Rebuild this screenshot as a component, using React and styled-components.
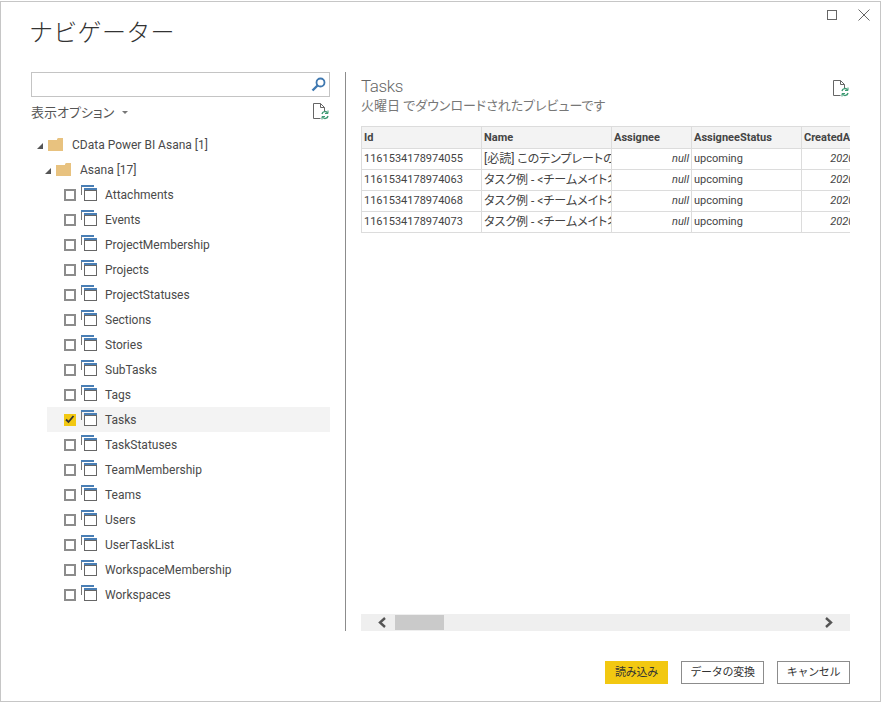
import React from 'react';
import styled, { createGlobalStyle } from 'styled-components';

const Global = createGlobalStyle`
  html, body { margin: 0; padding: 0; background: #fff; }
  body { font-family: Roboto, "Noto Sans CJK JP", sans-serif; font-feature-settings: "palt"; }
  * { box-sizing: border-box; }
`;
const Window = styled.div`
  width: 881px; height: 701px; margin-top: 1px; background: #fff;
  border: 1px solid #c6c6c6;
  display: flex; flex-direction: column;
`;
const Header = styled.header`
  height: 70px; padding: 13px 10px 0 28px; display: flex; justify-content: space-between; align-items: flex-start;
`;
const Title = styled.h1`
  margin: 0; font-size: 24px; line-height: 36px; font-weight: 300; color: #333; font-feature-settings: normal; letter-spacing: 0.3px;
`;
const Controls = styled.div`
  display: flex; gap: 21px; align-items: center; margin-top: -6px;
`;
const Main = styled.main`
  height: 559px; display: flex; padding-left: 30px;
`;
const LeftPane = styled.section`
  width: 299px; display: flex; flex-direction: column;
`;
const Search = styled.div`
  height: 25px; border: 1px solid #c4c4c4; display: flex; justify-content: flex-end; align-items: center; padding-right: 3px;
`;
const Options = styled.div`
  display: flex; justify-content: space-between; align-items: flex-start; height: 35px; padding-top: 6px; padding-right: 1px;
`;
const OptionLabel = styled.span`
  font-size: 13px; line-height: 19px; color: #555; display: flex; align-items: center; gap: 8px;
`;
const Caret = styled.i`
  width: 0; height: 0; border-left: 3px solid transparent; border-right: 3px solid transparent; border-top: 3px solid #777;
`;
const Tree = styled.ul`
  list-style: none; margin: 0; padding: 0;
`;
const Row = styled.li`
  height: 25px; display: flex; align-items: center; font-size: 12px; color: #4a4a4a;
  margin-left: ${p => p.$indent}px;
  padding-left: ${p => p.$pad || 0}px;
  background: ${p => p.$active ? '#f3f3f3' : 'transparent'};
`;
const Arrow = styled.i`
  width: 0; height: 0; margin-right: 5px; border-left: 6px solid transparent; border-bottom: 6px solid #555; margin-top: 2px;
`;
const FolderWrap = styled.span`
  display: flex; margin-right: 9px;
`;
const Check = styled.span`
  width: 12px; height: 12px; margin-right: 5px; display: flex; align-items: center; justify-content: center;
  background: ${p => p.$on ? '#f2c811' : '#fff'};
  border: ${p => p.$on ? 'none' : '2px solid #8c8c8c'};
`;
const TableIconWrap = styled.span`
  display: flex; margin-right: 8px; margin-top: -3px;
`;
const Divider = styled.div`
  width: 1px; background: #8c8c8c; margin-left: 15px; margin-right: 15px;
`;
const RightPane = styled.section`
  width: 489px; display: flex; flex-direction: column;
`;
const PreviewHead = styled.div`
  height: 54px; display: flex; justify-content: space-between; align-items: flex-start; padding-right: 1px;
`;
const PreviewTitle = styled.div`
  font-size: 17px; line-height: 24px; font-weight: 300; color: #666; margin-top: 2px; letter-spacing: -0.4px;
`;
const PreviewSub = styled.div`
  font-size: 13px; line-height: 16px; color: #777;
`;
const RefreshTop = styled.span`
  display: flex; margin-top: 8px;
`;
const TableClip = styled.div`
  flex: 1; overflow: hidden; min-height: 0;
`;
const Table = styled.table`
  border-collapse: collapse; table-layout: fixed; width: 566px; font-size: 11px; color: #444;
`;
const Th = styled.th`
  height: 22px; padding: 0 2px; background: #f3f3f3; border: 1px solid #dcdcdc; font-weight: 700; text-align: left;
  white-space: nowrap; overflow: hidden; color: #444;
`;
const Td = styled.td`
  height: 21px; padding: 0 2px; border: 1px solid #dcdcdc; white-space: nowrap; overflow: hidden; line-height: 14px;
  text-align: ${p => p.$num ? 'right' : 'left'};
  font-style: ${p => p.$num ? 'italic' : 'normal'};
  font-size: ${p => p.$jp ? '12px' : 'inherit'};
`;
const Scrollbar = styled.div`
  height: 17px; background: #efefef; display: flex; align-items: center; justify-content: space-between; position: relative; padding: 0 16px;
`;
const Thumb = styled.div`
  position: absolute; left: 34px; top: 1px; width: 49px; height: 15px; background: #cacaca;
`;
const Footer = styled.footer`
  flex: 1; display: flex; justify-content: flex-end; gap: 13px; padding: 30px 30px 0 0;
`;
const Button = styled.button`
  height: 23px; padding: 0; font-family: inherit; font-size: 11px; letter-spacing: -0.3px; color: #333; line-height: 1;
  width: ${p => p.$w}px;
  background: ${p => p.$primary ? '#f2c811' : '#fff'};
  border: ${p => p.$primary ? 'none' : '1px solid #8c8c8c'};
`;

const Folder = () => (
  <svg width="15" height="13" viewBox="0 0 15 13"><path d="M0 2h9V1l1-1h5v13H0z" fill="#e8c27f" /></svg>
);
const TableIcon = () => (
  <svg width="16" height="16" viewBox="0 0 16 16">
    <rect x="0" y="0" width="13" height="2" fill="#4a7fb5" />
    <path d="M.5 2v8" stroke="#777" fill="none" />
    <rect x="3" y="3" width="13" height="3" fill="#4a7fb5" />
    <rect x="3.5" y="5.5" width="12" height="10" fill="#fff" stroke="#666" />
  </svg>
);
const DocRefresh = () => (
  <svg width="16" height="17" viewBox="0 0 16 17" fill="none">
    <path d="M.5.5h7l4 4v4M7.5.5v4h4M.5.5v15h7" stroke="#666" />
    <path d="M9 11a3 3 0 0 1 5.500-1M15 13a3 3 0 0 1-5.500 1" stroke="#3d9a73" strokeWidth="1.4" />
    <path d="M15 7.500v3h-3M9 16.500v-3h3" stroke="#3d9a73" strokeWidth="1" />
  </svg>
);
const tables = ['Attachments','Events','ProjectMembership','Projects','ProjectStatuses','Sections','Stories','SubTasks','Tags','Tasks','TaskStatuses','TeamMembership','Teams','Users','UserTaskList','WorkspaceMembership','Workspaces'];
const rows = [
  ['1161534178974055','[必読] このテンプレートの使い方'],
  ['1161534178974063','タスク例 - <チームメイト名>'],
  ['1161534178974068','タスク例 - <チームメイト名>'],
  ['1161534178974073','タスク例 - <チームメイト名>'],
];

export default function App() {
  return (
    <Window>
      <Global />
      <Header>
        <Title>ナビゲーター</Title>
        <Controls>
          <svg width="10" height="10" viewBox="0 0 10 10"><rect x=".5" y=".5" width="9" height="9" fill="none" stroke="#666" /></svg>
          <svg width="12" height="12" viewBox="0 0 12 12"><path d="M.5.5l11 11M11.5.5l-11 11" stroke="#666" fill="none" /></svg>
        </Controls>
      </Header>
      <Main>
        <LeftPane>
          <Search>
            <svg width="15" height="15" viewBox="0 0 15 15" fill="none">
              <circle cx="9.500" cy="5.500" r="4" stroke="#3f78b0" strokeWidth="1.800" />
              <path d="M6.500 8.500L1.500 13.500" stroke="#3f78b0" strokeWidth="2.400" />
            </svg>
          </Search>
          <Options>
            <OptionLabel>表示オプション<Caret /></OptionLabel>
            <DocRefresh />
          </Options>
          <Tree>
            <Row $indent={6}><Arrow /><FolderWrap><Folder /></FolderWrap>CData Power BI Asana [1]</Row>
            <Row $indent={14}><Arrow /><FolderWrap><Folder /></FolderWrap>Asana [17]</Row>
            {tables.map(t => (
              <Row key={t} $indent={16} $pad={17} $active={t === 'Tasks'}>
                <Check $on={t === 'Tasks'}>
                  {t === 'Tasks' && <svg width="10" height="9" viewBox="0 0 10 9"><path d="M1 4.500l2.500 2.500 5-6" stroke="#333" strokeWidth="1.800" fill="none" /></svg>}
                </Check>
                <TableIconWrap><TableIcon /></TableIconWrap>
                {t}
              </Row>
            ))}
          </Tree>
        </LeftPane>
        <Divider />
        <RightPane>
          <PreviewHead>
            <div>
              <PreviewTitle>Tasks</PreviewTitle>
              <PreviewSub>火曜日 でダウンロードされたプレビューです</PreviewSub>
            </div>
            <RefreshTop><DocRefresh /></RefreshTop>
          </PreviewHead>
          <TableClip>
            <Table>
              <colgroup>
                <col width="120" /><col width="130" /><col width="80" /><col width="110" /><col width="126" />
              </colgroup>
              <thead>
                <tr><Th>Id</Th><Th>Name</Th><Th>Assignee</Th><Th>AssigneeStatus</Th><Th>CreatedAt</Th></tr>
              </thead>
              <tbody>
                {rows.map(r => (
                  <tr key={r[0]}>
                    <Td>{r[0]}</Td><Td $jp>{r[1]}</Td><Td $num>null</Td><Td>upcoming</Td><Td $num>2020/08/04 9:00:00</Td>
                  </tr>
                ))}
              </tbody>
            </Table>
          </TableClip>
          <Scrollbar>
            <svg width="10" height="11" viewBox="0 0 10 11"><path d="M8 1L3 5.500l5 4.500" stroke="#555" strokeWidth="2.400" fill="none" /></svg>
            <Thumb />
            <svg width="10" height="11" viewBox="0 0 10 11"><path d="M2 1l5 4.500-5 4.500" stroke="#555" strokeWidth="2.400" fill="none" /></svg>
          </Scrollbar>
        </RightPane>
      </Main>
      <Footer>
        <Button $primary $w={63}>読み込み</Button>
        <Button $w={83}>データの変換</Button>
        <Button $w={73}>キャンセル</Button>
      </Footer>
    </Window>
  );
}
